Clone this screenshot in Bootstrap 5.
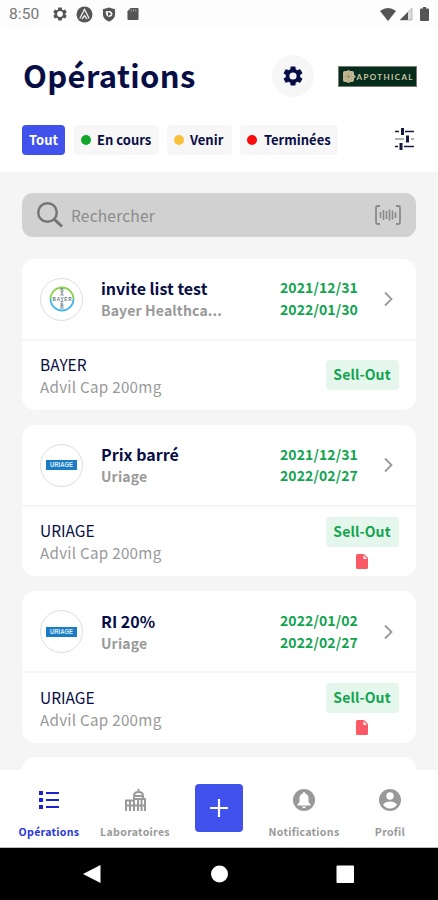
<!DOCTYPE html>
<html lang="fr">
<head>
<meta charset="utf-8">
<meta name="viewport" content="width=device-width, initial-scale=1">
<title>Opérations</title>
<link href="https://cdn.jsdelivr.net/npm/bootstrap@5.3.0/dist/css/bootstrap.min.css" rel="stylesheet">
<style>
:root{--navy:#070d45;--royal:#4152ec;--leaf:#11a44f;--mute:#999}
body{font-family:"Noto Sans CJK SC","Noto Sans",sans-serif;background:#f5f5f5;color:var(--navy)}
svg{display:block;flex:none}
.screen{width:438px;height:900px}
.statusbar{height:28px;padding:0 8px 0 9px;background:#fdfdfd}
.clock{font:15.5px/28px "Roboto",sans-serif;color:#777;width:44px;letter-spacing:.1px}
.titlebar{height:94px;padding:2px 21px 0 23px}
.titlebar h1{font-size:31px;line-height:44px;letter-spacing:.35px;width:249px;padding-bottom:2px}
.gear{width:42px;height:42px;background:#f6f6f7}
.filters{height:50px;padding:3px 24px 0 22px}
.chip{height:30px;border-radius:4px;background:#f7f7f7;font-size:13px;line-height:28px;white-space:nowrap}
.chip i{width:10px;height:10px;border-radius:50%;margin-right:6px}
.chip-on{background:var(--royal);color:#fff;line-height:29px}
.feed{padding:21px 22px 0}
.finder{height:44px;border-radius:11px;background:#d1d1d1;padding:0 15px 0 14px;margin-bottom:21.5px;color:#8b8b8b;font-size:15.5px;letter-spacing:.2px}
.op{height:151.5px;border-radius:13px;margin-bottom:14.8px}
.op-head{height:82px;border-bottom:2.5px solid #f5f5f5;padding:1px 23px 0 18px}
.op-foot{height:69px;padding:0 17.5px 0 18px}
.logo{width:43px;height:43px;border:1px solid #ddd;margin-right:18px}
.op-name{font-size:16px;line-height:22px}
.op-lab{font-size:14px;line-height:22px;color:var(--mute);letter-spacing:.15px}
.dates{font-size:14px;line-height:21.7px;color:var(--leaf);letter-spacing:.1px;width:78px;margin-right:26px;white-space:nowrap}
.brand{font-size:15.5px;line-height:22px}
.item{font-size:15.2px;line-height:22px;color:var(--mute);letter-spacing:.27px}
.tag{width:73px;height:30px;border-radius:4px;background:#e5f6ed;color:var(--leaf);font-size:14px;line-height:29px;letter-spacing:.1px}
.tabs{height:78px;border-bottom:1px solid #bbb;padding:0 5px 0 6px}
.tab{width:86px;padding-top:18px;color:var(--mute);font-size:10.6px;line-height:16px;letter-spacing:.3px}
.tab svg{margin-bottom:12px}
.tab-on{color:#2634d9}
.plus{width:48px;height:48px;border-radius:4px;background:var(--royal);margin:14px 18px 0 17px}
.sysbar{height:52px;background:#000}
</style>
</head>
<body>
<div class="screen d-flex flex-column overflow-hidden">
  <header class="bg-white flex-shrink-0">
    <div class="statusbar d-flex align-items-center">
      <span class="clock">8:50</span>
      <svg width="14" height="14" viewBox="0 0 24 24" fill="#555" style="margin-right:9px"><path fill-rule="evenodd" d="M9 1h6l.6 3.5 2 1.2 3.4-1.3 2.5 4.8L20.800 11.500v1l2.700 2.300-2.500 4.800-3.400-1.300-2 1.200L15 23H9l-.6-3.500-2-1.200L3 19.600.5 14.800l2.700-2.300v-1L.5 9.200 3 4.400l3.400 1.300 2-1.200zM12 7a5 5 0 1 0 0 10 5 5 0 0 0 0-10z"/></svg>
      <svg width="17" height="17" viewBox="0 0 17 17" class="me-2"><circle cx="8.500" cy="8.500" r="8" fill="#555"/><path d="M3.800 12.500 8.500 3.500l4.700 9M6 13l2.500-3.500L11 13" stroke="#eee" stroke-width="1.300" fill="none"/></svg>
      <svg width="14" height="15" viewBox="0 0 15 16" style="margin-left:1px;margin-right:8px"><path fill="#555" fill-rule="evenodd" d="M7.500.5 14 2.500v5c0 4-2.500 6.500-6.500 8C3.500 14 1 11.500 1 7.500v-5zM4 4.500q0 6 3.500 6t3.800-3.300q-.8-3-3.300-3z"/><path d="M6.500 5v5L10 7.500z" fill="#555"/></svg>
      <svg width="12" height="14" viewBox="0 0 13 14" style="margin-left:3px"><path fill="#555" d="M4 .5h7.500q1 0 1 1v11q0 1-1 1h-10q-1 0-1-1V4z"/><path d="M4.500 2v2.500M7 2v2.500M9.500 2v2.500" stroke="#aaa"/></svg>
      <svg width="16" height="13" viewBox="0 0 16 13" fill="#555" class="ms-auto"><path d="M0 3Q8-3 16 3L8 13z"/></svg>
      <svg width="14" height="14" viewBox="0 0 14 14" style="margin-left:3px"><path d="M13 1v12H1z" fill="#ddd" stroke="#999" stroke-width=".6"/><path d="M9 5v8H1z" fill="#555"/></svg>
      <svg width="9" height="14" viewBox="0 0 9 14" fill="#555" style="margin-left:7px;margin-right:1px"><path d="M3 0h3v1.500h2q1 0 1 1V13q0 1-1 1H1q-1 0-1-1V2.500q0-1 1-1h2z"/></svg>
    </div>
    <div class="titlebar d-flex align-items-center">
      <h1 class="fw-bold m-0">Opérations</h1>
      <div class="gear rounded-circle d-flex align-items-center justify-content-center">
        <svg width="24" height="24" viewBox="0 0 24 24" fill="#070d45"><path d="M19.140 12.940c.04-.3.06-.61.06-.94 0-.32-.02-.64-.07-.94l2.030-1.580c.18-.14.23-.41.12-.61l-1.920-3.320c-.12-.22-.37-.29-.59-.22l-2.390.96c-.5-.38-1.030-.7-1.620-.94l-.36-2.540c-.04-.24-.24-.41-.48-.41h-3.840c-.24 0-.43.17-.47.41l-.36 2.540c-.59.24-1.130.57-1.620.94l-2.390-.96c-.22-.08-.47 0-.59.22L2.740 8.870c-.12.210-.08.470.12.610l2.030 1.580c-.05.300-.09.630-.09.940s.02.640.07.940l-2.030 1.580c-.18.140-.23.410-.12.610l1.920 3.320c.12.220.37.290.59.220l2.390-.96c.5.380 1.030.700 1.620.940l.36 2.540c.05.240.24.410.48.410h3.840c.24 0 .44-.17.47-.41l.36-2.540c.59-.24 1.130-.56 1.620-.94l2.390.960c.22.080.47 0 .59-.22l1.920-3.320c.12-.22.07-.47-.12-.61l-2.010-1.580zM12 15.600A3.600 3.600 0 1 1 12 8.400a3.600 3.600 0 0 1 0 7.200z"/></svg>
      </div>
      <svg class="ms-auto" width="79" height="21" viewBox="0 0 79 21"><rect width="79" height="21" fill="#777b72"/><rect x="1" y="1" width="77" height="19" fill="#062c1d"/><g fill="#c5b995"><rect x="5" y="5" width="11" height="11" rx="2"/><circle cx="10.500" cy="5.500" r="1.500"/><circle cx="10.500" cy="15.500" r="1.500"/><circle cx="16" cy="10.500" r="1.500"/></g><path d="M7 7l7 7M14 7l-7 7M10.500 5v11M5 10.500h11" stroke="#8f8a68" stroke-width=".5"/><text x="18.500" y="13.600" font-family="Lato,sans-serif" font-size="8" font-weight="700" fill="#cfc6a8" textLength="56">APOTHICAL</text></svg>
    </div>
    <div class="filters d-flex">
      <div class="chip chip-on fw-bold text-center" style="width:43px">Tout</div>
      <div class="chip fw-bold d-flex align-items-center" style="width:85px;margin-left:9px;padding-left:7px"><i style="background:#12a52c"></i>En cours</div>
      <div class="chip fw-bold d-flex align-items-center" style="width:65px;margin-left:8px;padding-left:7px"><i style="background:#f8c03c"></i>Venir</div>
      <div class="chip fw-bold d-flex align-items-center" style="width:98px;margin-left:8px;padding-left:7px"><i style="background:#fa0c0c;margin-right:7px"></i>Terminées</div>
      <svg class="ms-auto" style="margin-top:2px" width="19" height="24" viewBox="0 0 19 24" stroke="#15193f" fill="none"><path d="M0 4.500h4M10 4.500h9M0 19.500h3M9 19.500h10" stroke-width="1.500"/><path d="M0 12h9M16 12h3" stroke="#999" stroke-width="1.500"/><path d="M7.500 1v7M12.500 8.500v7M6 16v7" stroke-width="3"/></svg>
    </div>
  </header>

  <main class="feed flex-grow-1 overflow-hidden">
    <div class="finder d-flex align-items-center">
      <svg width="28" height="28" viewBox="0 0 28 28" fill="none" stroke="#767676" stroke-width="2.500"><circle cx="11.500" cy="11.500" r="9.300"/><path d="M18.300 18.300 26 25.500" stroke-width="3"/></svg>
      <span style="margin-left:7px;padding-top:1px">Rechercher</span>
      <svg class="ms-auto" width="26" height="20" viewBox="0 0 26 20" fill="none" stroke="#8a8a8a"><path d="M5 1H2.500Q1 1 1 2.500v15Q1 19 2.500 19H5M21 1h2.500Q25 1 25 2.500v15q0 1.500-1.500 1.500H21" stroke-width="1.800"/><path d="M5.500 7v6M8.500 5v10M11.500 6v8M14.500 4.500v11M17.500 5.500v9M20.500 7v6" stroke-width="1.600"/></svg>
    </div>

    <article class="op bg-white">
      <div class="op-head d-flex align-items-center">
        <div class="logo rounded-circle d-flex align-items-center justify-content-center">
          <svg width="26" height="26" viewBox="0 0 26 26" fill="none"><path d="M1.500 13a11.500 11.500 0 0 1 23 0" stroke="#89d34a" stroke-width="1.800"/><path d="M24.500 13a11.500 11.500 0 0 1-23 0" stroke="#45b5ec" stroke-width="1.800"/><g font-family="Liberation Sans" font-size="4.600" font-weight="700" fill="#5f747d" text-anchor="middle"><text x="13" y="14.600" textLength="19">BAYER</text><text x="13" y="6.300">B</text><text x="13" y="10.300">A</text><text x="13" y="19">E</text><text x="13" y="23">R</text></g></svg>
        </div>
        <div><div class="op-name fw-bold">invite list test</div><div class="op-lab fw-bold">Bayer Healthca...</div></div>
        <div class="dates fw-bold ms-auto">2021/12/31<br>2022/01/30</div>
        <svg width="9" height="16" viewBox="0 0 9 16" fill="none" stroke="#999" stroke-width="1.800"><path d="m1 1.500 6.500 6.500L1 14.500"/></svg>
      </div>
      <div class="op-foot d-flex align-items-center justify-content-between">
        <div style="margin-top:-1px"><div class="brand">BAYER</div><div class="item">Advil Cap 200mg</div></div>
        <div class="tag fw-bold text-center">Sell-Out</div>
      </div>
    </article>

    <article class="op bg-white">
      <div class="op-head d-flex align-items-center">
        <div class="logo rounded-circle d-flex align-items-center justify-content-center">
          <svg width="31" height="10" viewBox="0 0 31 10"><rect width="31" height="10" fill="#1b7cc6"/><text x="4" y="7.400" font-family="Liberation Sans" font-size="6.600" font-weight="700" fill="#dcecf8" textLength="23" lengthAdjust="spacingAndGlyphs">URIAGE</text></svg>
        </div>
        <div><div class="op-name fw-bold">Prix barré</div><div class="op-lab fw-bold">Uriage</div></div>
        <div class="dates fw-bold ms-auto">2021/12/31<br>2022/02/27</div>
        <svg width="9" height="16" viewBox="0 0 9 16" fill="none" stroke="#999" stroke-width="1.800"><path d="m1 1.500 6.500 6.500L1 14.500"/></svg>
      </div>
      <div class="op-foot d-flex align-items-center justify-content-between">
        <div><div class="brand">URIAGE</div><div class="item">Advil Cap 200mg</div></div>
        <div class="d-flex flex-column align-items-center" style="padding-top:3px"><div class="tag fw-bold text-center">Sell-Out</div>
        <svg style="margin-top:7px" width="12" height="15" viewBox="0 0 12 15"><path d="M1.500 0H8l4 4v9.500q0 1.500-1.500 1.500h-9Q0 15 0 13.500v-12Q0 0 1.500 0z" fill="#fb5965"/><path d="M7.500 1v4H11z" fill="#fff"/></svg></div>
      </div>
    </article>

    <article class="op bg-white">
      <div class="op-head d-flex align-items-center">
        <div class="logo rounded-circle d-flex align-items-center justify-content-center">
          <svg width="31" height="10" viewBox="0 0 31 10"><rect width="31" height="10" fill="#1b7cc6"/><text x="4" y="7.400" font-family="Liberation Sans" font-size="6.600" font-weight="700" fill="#dcecf8" textLength="23" lengthAdjust="spacingAndGlyphs">URIAGE</text></svg>
        </div>
        <div><div class="op-name fw-bold">RI 20%</div><div class="op-lab fw-bold">Uriage</div></div>
        <div class="dates fw-bold ms-auto">2022/01/02<br>2022/02/27</div>
        <svg width="9" height="16" viewBox="0 0 9 16" fill="none" stroke="#999" stroke-width="1.800"><path d="m1 1.500 6.500 6.500L1 14.500"/></svg>
      </div>
      <div class="op-foot d-flex align-items-center justify-content-between">
        <div><div class="brand">URIAGE</div><div class="item">Advil Cap 200mg</div></div>
        <div class="d-flex flex-column align-items-center" style="padding-top:3px"><div class="tag fw-bold text-center">Sell-Out</div>
        <svg style="margin-top:7px" width="12" height="15" viewBox="0 0 12 15"><path d="M1.500 0H8l4 4v9.500q0 1.500-1.500 1.500h-9Q0 15 0 13.500v-12Q0 0 1.500 0z" fill="#fb5965"/><path d="M7.500 1v4H11z" fill="#fff"/></svg></div>
      </div>
    </article>

    <article class="op bg-white"></article>
  </main>

  <nav class="tabs bg-white d-flex flex-shrink-0 fw-bold">
    <div class="tab tab-on d-flex flex-column align-items-center">
      <svg width="22" height="24" viewBox="0 0 22 24" fill="#1b24d2"><path d="M1 3h4v4H1zM1 10h4v4H1zM1 17h4v4H1zM8 4h13v2H8zM8 11h13v2H8zM8 18h13v2H8z"/></svg>
      Opérations
    </div>
    <div class="tab d-flex flex-column align-items-center">
      <svg width="22" height="24" viewBox="0 0 22 24" fill="none" stroke="#999" stroke-width="2"><path d="M2 23V12.500h8M10 23V8q0-4 4.500-4T19 8v3M14.500 1v3M10 11h11v12M2 17.500h19M6 12.500V23M14 11v12M17.500 11v12M11 8h7"/></svg>
      Laboratoires
    </div>
    <div class="plus d-flex align-items-center justify-content-center flex-shrink-0"><svg width="20" height="20" viewBox="0 0 20 20" stroke="#fff" stroke-width="2.200"><path d="M10 1v18M1 10h18"/></svg></div>
    <div class="tab d-flex flex-column align-items-center">
      <svg width="24" height="24" viewBox="0 0 24 24"><circle cx="12" cy="12" r="11" fill="#999"/><path d="M12 4q1.300 0 1.300 1.500 3.200 1 3.200 4.500v4l2 2.500v1h-13v-1l2-2.500v-4q0-3.500 3.200-4.500Q10.700 4 12 4zM10 18.500h4q-.5 1.800-2 1.800t-2-1.800z" fill="#fff"/></svg>
      Notifications
    </div>
    <div class="tab d-flex flex-column align-items-center">
      <svg width="24" height="24" viewBox="0 0 24 24"><circle cx="12" cy="12" r="11" fill="#999"/><circle cx="12" cy="8" r="3.700" fill="#fff"/><path d="M5 16.500q2.500-3 7-3t7 3q-2.500 4-7 4t-7-4z" fill="#fff"/></svg>
      Profil
    </div>
  </nav>
  <div class="sysbar d-flex align-items-center flex-shrink-0">
    <svg width="438" height="52" viewBox="0 0 438 52" fill="#fff"><path d="M83 26 100.500 17v18z"/><circle cx="219.500" cy="26" r="8.500"/><rect x="336.500" y="17.500" width="17.500" height="17.500" rx="1"/></svg>
  </div>
</div>
<script src="https://cdn.jsdelivr.net/npm/bootstrap@5.3.0/dist/js/bootstrap.bundle.min.js"></script>
</body>
</html>
